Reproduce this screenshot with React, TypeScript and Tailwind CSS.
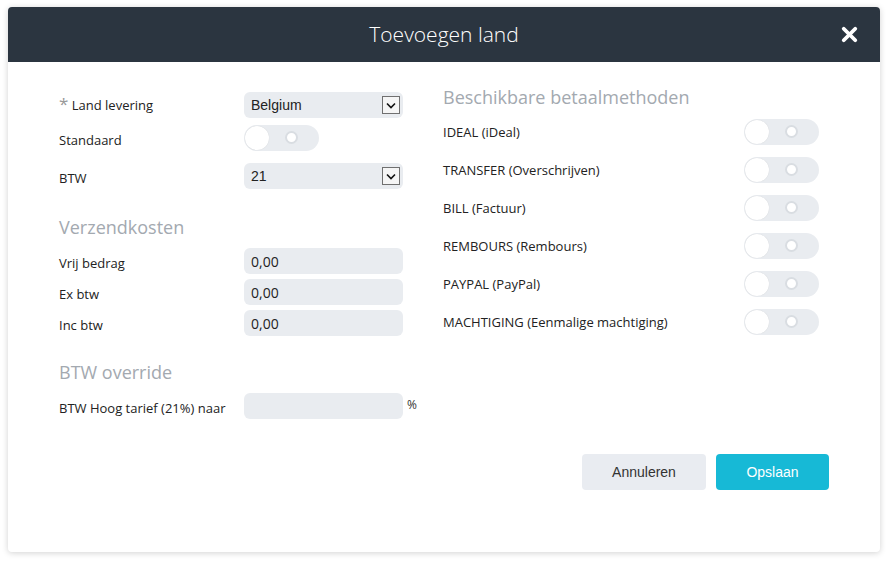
import { X } from 'lucide-react';

const sans = { fontFamily: '"Open Sans", "Liberation Sans", sans-serif' };
const arial = { fontFamily: '"Liberation Sans", Arial, sans-serif' };

function Toggle() {
  return (
    <div className="relative h-[26px] w-[75px] rounded-full bg-[#e9ecf0]">
      <div className="absolute left-[1px] top-[1px] h-[24px] w-[24px] rounded-full bg-white shadow-[0_0_1px_rgba(0,0,0,0.15)]" />
      <div className="absolute left-[41px] top-[6px] h-[13px] w-[13px] rounded-full border-2 border-[#d9dde2] bg-white" />
    </div>
  );
}

function Select({ value }: { value: string }) {
  return (
    <div className="flex h-[26px] w-[159px] items-center justify-between rounded-md bg-[#e9ecf0] pl-[7px] pr-[3px]" style={arial}>
      <span className="text-[14px] text-[#222]">{value}</span>
      <span className="flex h-[18px] w-[18px] items-center justify-center border border-[#707070] bg-[#f5f5f5]">
        <svg width="10" height="7" viewBox="0 0 10 7">
          <path d="M1 1.5 L5 5.5 L9 1.5" fill="none" stroke="#111" strokeWidth="1.6" />
        </svg>
      </span>
    </div>
  );
}

function TextInput({ value }: { value?: string }) {
  return (
    <div className="flex h-[26px] w-[159px] items-center rounded-md bg-[#e9ecf0] px-[7px] text-[14px] text-[#222]" style={sans}>
      {value}
    </div>
  );
}

function Row({ label, children, h, lo = true }: { label: React.ReactNode; children: React.ReactNode; h: string; lo?: boolean }) {
  return (
    <div className={`flex items-center ${h}`}>
      <div className={`w-[185px] text-[13px] text-[#222] ${lo ? 'pt-[5px]' : 'pt-[2px]'}`}>{label}</div>
      {children}
    </div>
  );
}

const methods = [
  'IDEAL (iDeal)',
  'TRANSFER (Overschrijven)',
  'BILL (Factuur)',
  'REMBOURS (Rembours)',
  'PAYPAL (PayPal)',
  'MACHTIGING (Eenmalige machtiging)',
];

export default function App() {
  return (
    <div className="h-[562px] w-[890px] bg-white pl-[8px] pt-[7px]" style={sans}>
      <div className="flex h-[545px] w-[872px] flex-col rounded-[4px] bg-white shadow-[0_1px_6px_rgba(0,0,0,0.18)]">
        <div className="relative flex h-[55px] items-center justify-center rounded-t-[4px] bg-[#2b3540]">
          <h1 className="text-[21px] font-light text-white">Toevoegen land</h1>
          <X className="absolute right-[19px] top-[16px] h-[23px] w-[23px] text-white" strokeWidth={4} />
        </div>

        <div className="flex flex-1 flex-col px-[51px]">
          <div className="flex">
            <div className="w-[384px] pt-[30px]">
              <Row h="h-[26px]" lo={false} label={<><span className="text-[17px] leading-[13px] text-[#999]">*</span> Land levering</>}>
                <Select value="Belgium" />
              </Row>
              <Row h="mt-[7px] h-[26px]" label="Standaard">
                <Toggle />
              </Row>
              <Row h="mt-[12px] h-[26px]" label="BTW">
                <Select value="21" />
              </Row>

              <h2 className="mt-[25px] text-[18px] leading-[26px] text-[#a3a9b0]">Verzendkosten</h2>
              <Row h="mt-[8px] h-[26px]" label="Vrij bedrag">
                <TextInput value="0,00" />
              </Row>
              <Row h="mt-[5px] h-[26px]" label="Ex btw">
                <TextInput value="0,00" />
              </Row>
              <Row h="mt-[5px] h-[26px]" label="Inc btw">
                <TextInput value="0,00" />
              </Row>

              <h2 className="mt-[23px] text-[18px] leading-[26px] text-[#a3a9b0]">BTW override</h2>
              <Row h="mt-[8px] h-[26px]" label="BTW Hoog tarief (21%) naar">
                <TextInput />
                <span className="ml-[4px] mt-[-2px] text-[12px] text-[#333]">%</span>
              </Row>
            </div>

            <div className="flex-1 pt-[22px]">
              <h2 className="text-[18px] leading-[26px] text-[#a3a9b0]">Beschikbare betaalmethoden</h2>
              <div className="mt-[9px] flex flex-col gap-[12px]">
                {methods.map((m) => (
                  <div key={m} className="flex h-[26px] items-center justify-between pr-[10px]">
                    <span className="pt-[2px] text-[13px] text-[#222]">{m}</span>
                    <Toggle />
                  </div>
                ))}
              </div>
            </div>
          </div>

          <div className="mt-[35px] flex justify-end gap-[10px]" style={arial}>
            <button className="h-[36px] w-[124px] rounded-[4px] bg-[#e9ecf1] text-[14px] text-[#333]">Annuleren</button>
            <button className="h-[36px] w-[113px] rounded-[4px] bg-[#17b9d6] text-[14px] text-white">Opslaan</button>
          </div>
        </div>
      </div>
    </div>
  );
}
